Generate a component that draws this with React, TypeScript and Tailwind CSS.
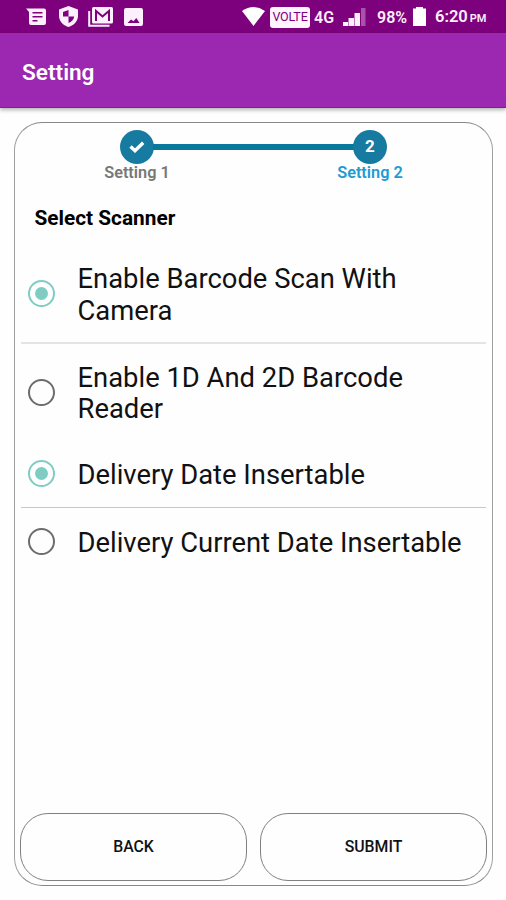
import React from "react";
import { clsx } from "clsx";

interface OptionProps {
  label: string;
  checked?: boolean;
  className?: string;
}

function StatusBar() {
  return (
    <div className="flex h-[33px] shrink-0 items-center bg-[#7d007c] text-[16px] font-medium leading-none text-[#fdeffd]">
      {/* Notifications */}
      <svg className="ml-[26px] h-[18px] w-5" viewBox="0 0 20 18" fill="currentColor">
        <path fillRule="evenodd" d="M0 0.5H18Q20 .5 20 2.5V15Q20 17 18 17H5Q3 17 3 15V4ZM6.500 4V5.500H16.500V4ZM6.500 8V9.500H16.500V8ZM6.500 12V13.500H11.500V12Z" />
      </svg>
      <svg className="ml-[13px] h-[21px] w-[19px]" viewBox="0 0 19 21" fill="currentColor">
        <path fillRule="evenodd" d="M9.500 0L19 3.500V10C19 15 15 19.500 9.500 21C4 19.500 0 15 0 10V3.500ZM9.500 4L4 6V10.500H9.500ZM9.500 10.500V17C12.500 16 14.800 13.600 15.200 10.500Z" />
      </svg>
      <svg className="ml-[10px] h-5 w-[25px]" viewBox="0 0 25 20" fill="none" stroke="currentColor">
        <path d="M1.200 4V18.800H21.500" strokeWidth="2" />
        <rect x="4" y="0" width="21" height="16.500" rx="1.500" fill="currentColor" stroke="none" />
        <path d="M8 14V4L14.500 9.500L21 4V14" stroke="#7d007c" strokeWidth="2" />
      </svg>
      <svg className="ml-[11px] h-[18px] w-[19px]" viewBox="0 0 19 18" fill="currentColor">
        <path fillRule="evenodd" d="M2 0H17Q19 0 19 2V16Q19 18 17 18H2Q0 18 0 16V2Q0 0 2 0ZM3.500 15H15.500L12.300 10L9.500 13.300L7 11.500Z" />
      </svg>

      {/* Connectivity, battery and clock */}
      <svg className="ml-[99px] h-[19px] w-[23px]" viewBox="0 0 23 19" fill="#fff">
        <path d="M0 4Q11.500 -4 23 4L11.500 19Z" />
      </svg>
      <span className="ml-[5px] mt-[2px] flex h-[21px] w-10 items-center justify-center rounded-[3px] bg-[#fff5ff] text-[12.5px] font-normal tracking-[-0.2px] text-[#7d007c]">
        VOLTE
      </span>
      <span className="ml-1 w-[21px] whitespace-nowrap pt-[2px] font-semibold">4G</span>
      <svg className="ml-[8px] h-[18px] w-[23px]" viewBox="0 0 23 18" fill="currentColor">
        <path d="M0 14H5V18H0ZM5.500 10H11V18H5.500ZM11.500 5H17V18H11.500Z" />
        <path d="M18 0H22.500V18H18Z" opacity="0.350" />
      </svg>
      <span className="ml-[11px] w-[31px] whitespace-nowrap pt-[2px] font-semibold">98%</span>
      <svg className="ml-[5px] h-[19px] w-[13px]" viewBox="0 0 13 19" fill="#fff">
        <path d="M3 0H10V1.500H13V19H0V1.500H3Z" />
      </svg>
      <span className="ml-[9px] whitespace-nowrap pt-[2px] text-[16.5px] font-semibold">
        6:20<span className="ml-[2px] text-[11px]">PM</span>
      </span>
    </div>
  );
}

function Stepper() {
  return (
    <div className="flex items-start pl-[79px] pr-[79px] pt-[7px]">
      <div className="flex w-[86px] flex-col items-center">
        <div className="flex size-[34px] items-center justify-center rounded-full bg-[#177aa0]">
          <svg className="h-3 w-4" viewBox="0 0 16 12" fill="none" stroke="#fff" strokeWidth="3.400">
            <path d="M1.500 5.500L6 9.700L14.200 1.700" />
          </svg>
        </div>
        <span className="whitespace-nowrap text-[16.3px] font-semibold leading-[17px] text-[#787878]">Setting 1</span>
      </div>
      <div className="-mx-[27px] mt-[14px] h-[6px] flex-1 bg-[#08799c]" />
      <div className="flex w-[86px] flex-col items-center">
        <div className="flex size-[34px] items-center justify-center rounded-full bg-[#177aa0] text-[17px] font-bold text-white">
          2
        </div>
        <span className="whitespace-nowrap text-[16.3px] font-semibold leading-[17px] text-[#239bd1]">Setting 2</span>
      </div>
    </div>
  );
}

function Option({ label, checked, className }: OptionProps) {
  return (
    <div className={clsx("flex items-center pl-[7px]", className)}>
      <span
        className={clsx(
          "flex size-[27px] shrink-0 items-center justify-center rounded-full border-2",
          checked ? "border-[#7fcdc2]" : "border-[#6c6c6c]"
        )}
      >
        {checked && <span className="size-[13px] rounded-full bg-[#7fcdc2]" />}
      </span>
      <span className="ml-[22.5px] w-[395px] pt-1 text-[27.4px] leading-[31.5px] text-[#111]">{label}</span>
    </div>
  );
}

function ActionButton({ children }: { children: React.ReactNode }) {
  return (
    <button className="h-[68px] flex-1 rounded-[28px] border border-[#808080] text-[15.8px] font-medium text-[#111]">
      {children}
    </button>
  );
}

export default function App() {
  return (
    <div className="flex h-[900px] w-[506px] flex-col overflow-hidden bg-[#fefefe] font-['Roboto',sans-serif]">
      <StatusBar />
      <header className="flex h-[75px] shrink-0 items-center border-b border-[#8d13a0] bg-[#9c27b0] pl-[22px] pt-[5px] shadow-[0_2px_4px_rgba(0,0,0,0.3)]">
        <h1 className="text-[22.6px] font-semibold text-white">Setting</h1>
      </header>

      <main className="mb-[14px] ml-[14px] mr-[13px] mt-[14px] flex flex-1 flex-col rounded-[28px] border border-x-[#a0a0a0] border-y-[#888]">
        <Stepper />
        <h2 className="mt-[25px] pl-[19.5px] text-[20.8px] font-bold leading-6 text-black">Select Scanner</h2>

        <div className="mx-[6px] mt-[17px]">
          <Option label="Enable Barcode Scan With Camera" checked className="h-[95px] pb-[2px]" />
          <hr className="border-t-2 border-[#e4e4e4]" />
          <Option label="Enable 1D And 2D Barcode Reader" className="h-[96px]" />
        </div>
        <div className="mx-[6px]">
          <Option label="Delivery Date Insertable" checked className="h-[67px]" />
          <hr className="border-t border-[#c8c8c8]" />
          <Option label="Delivery Current Date Insertable" className="h-[67px]" />
        </div>

        <div className="mt-auto flex gap-[13px] px-[5px] pb-1">
          <ActionButton>BACK</ActionButton>
          <ActionButton>SUBMIT</ActionButton>
        </div>
      </main>
    </div>
  );
}
